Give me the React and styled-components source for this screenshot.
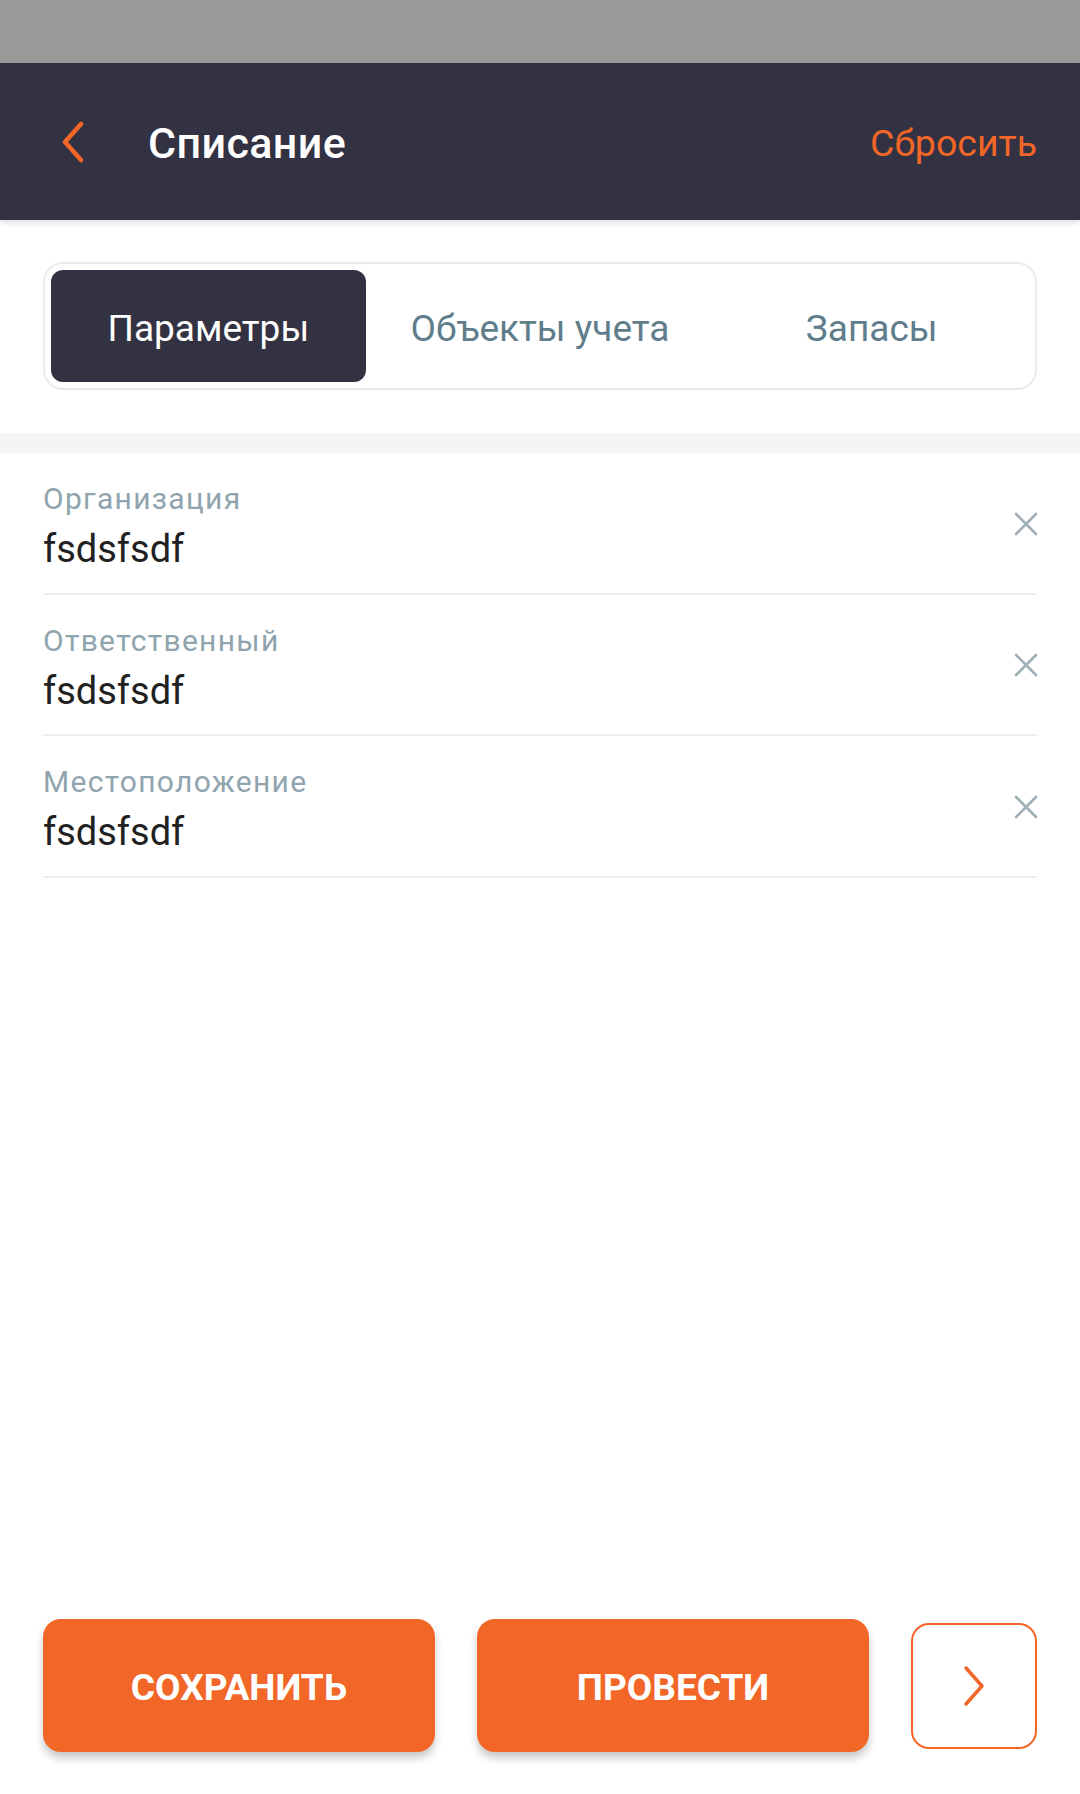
import React from "react";
import styled, { createGlobalStyle } from "styled-components";

const GlobalStyle = createGlobalStyle`
  html, body {
    margin: 0;
    padding: 0;
    background: #ffffff;
    font-family: Roboto, "Noto Sans", sans-serif;
  }
  * {
    box-sizing: border-box;
  }
`;

const Screen = styled.div`
  display: flex;
  flex-direction: column;
  width: 1080px;
  min-height: 1794px;
  background: #ffffff;
`;

const StatusBar = styled.div`
  height: 63px;
  background: #999999;
`;

const Header = styled.header`
  position: relative;
  display: flex;
  align-items: center;
  height: 157px;
  padding: 3px 43px 0 56px;
  background: #333242;
  box-shadow: 0 3px 6px rgba(0, 0, 0, 0.12);
  z-index: 2;
`;

const BackButton = styled.button`
  display: flex;
  align-items: center;
  justify-content: center;
  width: 34px;
  height: 50px;
  margin: -3px 58px 0 0;
  padding: 0;
  border: none;
  background: transparent;
`;

const Title = styled.h1`
  flex: 1;
  margin: 0;
  color: #ffffff;
  font-size: 43px;
  font-weight: 500;
  letter-spacing: 0.4px;
`;

const ResetLink = styled.span`
  color: #f26628;
  font-size: 37.5px;
  font-weight: 400;
`;

const TabsWrap = styled.div`
  padding: 42px 43px 43px;
`;

const Tabs = styled.div`
  display: flex;
  gap: 17px;
  height: 128px;
  padding: 6px;
  border: 2px solid #e8ecef;
  border-radius: 20px;
`;

const Tab = styled.div`
  flex: 1;
  display: flex;
  align-items: center;
  justify-content: center;
  padding-top: 4px;
  border-radius: 12px;
  background: ${(p) => (p.$active ? "#333242" : "transparent")};
  color: ${(p) => (p.$active ? "#ffffff" : "#607d8b")};
  font-size: 37px;
`;

const Strip = styled.div`
  height: 20px;
  background: #f4f5f7;
`;

const Form = styled.div`
  display: flex;
  flex-direction: column;
  padding: 0 43px;
`;

const Field = styled.div`
  display: flex;
  align-items: center;
  padding: 29px 0 21.5px;
  border-bottom: 2px solid #eceff1;
`;

const FieldBody = styled.div`
  flex: 1;
  display: flex;
  flex-direction: column;
  gap: 11px;
`;

const Label = styled.span`
  color: #90a4ae;
  font-size: 30px;
  line-height: 34px;
  letter-spacing: 1.3px;
`;

const Value = styled.span`
  color: #212121;
  font-size: 38px;
  line-height: 44px;
`;

const ClearButton = styled.button`
  display: flex;
  align-items: center;
  justify-content: center;
  width: 30px;
  height: 30px;
  margin: 0 -4px 6px 0;
  padding: 0;
  border: none;
  background: transparent;
`;

const Spacer = styled.div`
  flex: 1;
`;

const Footer = styled.div`
  display: flex;
  align-items: center;
  gap: 42px;
  padding: 0 43px 42px;
`;

const ActionButton = styled.button`
  flex: 1;
  height: 133px;
  padding-top: 4px;
  border: none;
  border-radius: 18px;
  background: #f26628;
  color: #ffffff;
  font-family: Roboto, sans-serif;
  font-size: 37px;
  font-weight: 700;
  box-shadow: 0 6px 9px rgba(0, 0, 0, 0.22);
`;

const NextButton = styled.button`
  display: flex;
  align-items: center;
  justify-content: center;
  width: 126px;
  height: 126px;
  padding: 0;
  border: 2px solid #f26628;
  border-radius: 18px;
  background: #ffffff;
`;

const fields = [
  { label: "Организация", value: "fsdsfsdf" },
  { label: "Ответственный", value: "fsdsfsdf" },
  { label: "Местоположение", value: "fsdsfsdf" },
];

const tabs = ["Параметры", "Объекты учета", "Запасы"];

const App = () => {
  return (
    <Screen>
      <GlobalStyle />
      <StatusBar />
      <Header>
        <BackButton>
          <svg width="26" height="42" viewBox="0 0 26 42">
            <path
              d="M21 3 L5 21 L21 39"
              fill="none"
              stroke="#f26628"
              strokeWidth="4.5"
              strokeLinecap="round"
              strokeLinejoin="round"
            />
          </svg>
        </BackButton>
        <Title>Списание</Title>
        <ResetLink>Сбросить</ResetLink>
      </Header>

      <TabsWrap>
        <Tabs>
          {tabs.map((t, i) => (
            <Tab key={t} $active={i === 0}>
              {t}
            </Tab>
          ))}
        </Tabs>
      </TabsWrap>
      <Strip />

      <Form>
        {fields.map((f) => (
          <Field key={f.label}>
            <FieldBody>
              <Label>{f.label}</Label>
              <Value>{f.value}</Value>
            </FieldBody>
            <ClearButton>
              <svg width="24" height="24" viewBox="0 0 24 24">
                <path
                  d="M2 2 L22 22 M22 2 L2 22"
                  stroke="#9eafb7"
                  strokeWidth="2.6"
                  strokeLinecap="round"
                />
              </svg>
            </ClearButton>
          </Field>
        ))}
      </Form>

      <Spacer />

      <Footer>
        <ActionButton>СОХРАНИТЬ</ActionButton>
        <ActionButton>ПРОВЕСТИ</ActionButton>
        <NextButton>
          <svg width="26" height="42" viewBox="0 0 26 42">
            <path
              d="M5 3 L21 21 L5 39"
              fill="none"
              stroke="#f26628"
              strokeWidth="3.5"
              strokeLinecap="round"
              strokeLinejoin="round"
            />
          </svg>
        </NextButton>
      </Footer>
    </Screen>
  );
};

export default App;
